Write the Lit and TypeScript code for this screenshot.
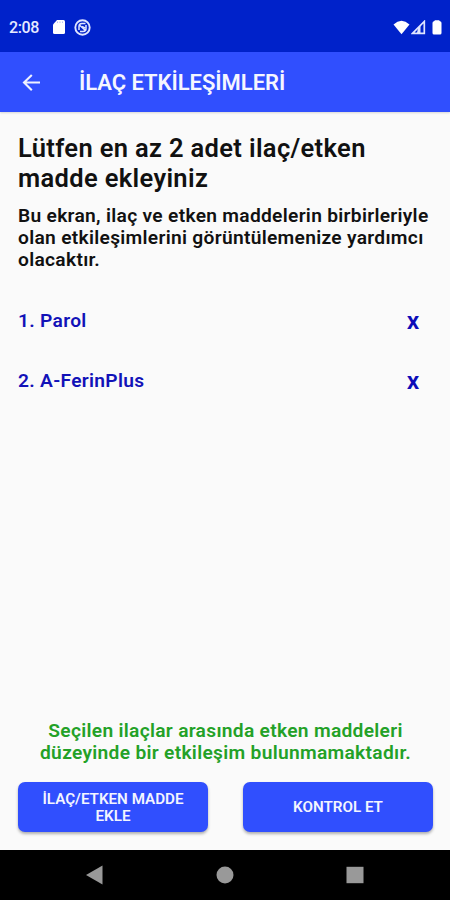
import { LitElement, html, css, svg } from "lit";
import { customElement, state } from "lit/decorators.js";

@customElement("status-bar")
class StatusBar extends LitElement {
  static styles = css`
    :host { display: flex; height: 52px; background: #0022ca; color: #e6eaff; align-items: center; padding: 2px 8px 0 9px; box-sizing: border-box; font-size: 16px; font-weight: 500; }
    .time { width: 43px; line-height: 20px; letter-spacing: -0.4px; padding-top: 1px; }
    .spacer { flex: 1; }
    svg { display: block; }
    .sync { margin-left: 8px; }
    .signal { margin-left: 1px; }
    .battery { margin-left: 6px; }
  `;
  render() {
    return html`
      <span class="time">2:08</span>
      <svg width="14" height="14" viewBox="0 0 14 14"><path d="M5 0H11.5Q13 0 13 1.5V12.5Q13 14 11.5 14H2.500Q1 14 1 12.500V4.500Z" fill="#fff"/><path d="M5.500 1.500v1.500M8 1.500v1.500M10.500 1.500v1.500" stroke="#b9c3f5" stroke-width="1"/></svg>
      <svg class="sync" width="17" height="17" viewBox="0 0 17 17" fill="none" stroke="#dfe5ff"><circle cx="8.500" cy="8.500" r="7.200" stroke-width="1.900"/><path d="M5 11V7.500Q5 4.500 8 4.500H11.500M12 6V9.500Q12 12.500 9 12.500H6M4.800 5.500L12 12M8 7.500L11 9" stroke-width="1.500"/></svg>
      <span class="spacer"></span>
      <svg width="17" height="15" viewBox="0 0 17 15"><path d="M0.500 4.500Q8.500 -2.800 16.500 4.500L8.500 14.300Z" fill="#fff"/></svg>
      <svg class="signal" width="15" height="15" viewBox="0 0 15 15"><path d="M1.500 13.400L13.300 1.500V13.400Z" fill="none" stroke="#dfe5ff" stroke-width="1.700"/><path d="M7 8L9.500 5.500V13H6Z" fill="#dfe5ff"/></svg>
      <svg class="battery" width="10" height="15" viewBox="0 0 10 15"><path d="M3 0.300H7L8 1.200Q9.500 1.500 9.500 3V13Q9.500 14.500 8 14.500H2Q0.500 14.500 0.500 13V3Q0.500 1.500 2 1.200Z" fill="#fff"/></svg>
    `;
  }
}

@customElement("app-bar")
class AppBar extends LitElement {
  static styles = css`
    :host { display: flex; align-items: center; height: 60px; background: #304ffe; color: #f5f6ff; padding: 2px 0 0 22px; box-sizing: border-box; box-shadow: 0 1px 2px rgba(0, 0, 0, 0.15); }
    .back { width: 19px; height: 18px; margin-right: 38px; display: block; }
    .title { font-size: 22px; font-weight: 600; line-height: 30px; letter-spacing: -0.05px; white-space: nowrap; }
  `;
  render() {
    return html`
      <svg class="back" viewBox="0 0 19 18" fill="none" stroke="#eef1ff" stroke-width="2.100"><path d="M18 8.500H2M9.800 0.900L2 8.500L9.800 16.200"/></svg>
      <span class="title">İLAÇ ETKİLEŞİMLERİ</span>
    `;
  }
}

@customElement("nav-bar")
class NavBar extends LitElement {
  static styles = css`
    :host { display: flex; height: 50px; background: #000; justify-content: space-between; align-items: center; padding: 0 85px; box-sizing: border-box; }
    svg { display: block; width: 20px; height: 20px; fill: #999; }
  `;
  render() {
    const shapes = [
      svg`<path d="M1 10L17.500 0.500V19.500Z"/>`,
      svg`<circle cx="10" cy="10" r="8.500"/>`,
      svg`<rect x="1.500" y="1.800" width="17" height="16.400"/>`,
    ];
    return shapes.map((s) => html`<svg viewBox="0 0 20 20">${s}</svg>`);
  }
}

@customElement("app-root")
class AppRoot extends LitElement {
  static styles = css`
    :host { display: flex; flex-direction: column; width: 450px; height: 900px; overflow: hidden; background: #fafafa; color: #111; font-family: Roboto, "Liberation Sans", sans-serif; font-weight: 600; }
    main { flex: 1; display: flex; flex-direction: column; padding: 21px 17px 18px 18px; }
    h1 { margin: 0; font-size: 25.5px; line-height: 30px; font-weight: 600; letter-spacing: 0.34px; white-space: nowrap; }
    p { margin: 0; font-size: 19.2px; line-height: 22px; letter-spacing: 0.3px; white-space: nowrap; }
    .intro { margin-top: 12px; }
    .list { margin-top: 20px; }
    .row { display: flex; justify-content: space-between; align-items: center; height: 60px; color: #1212b8; font-size: 19.2px; letter-spacing: 0.3px; }
    .row span { padding-bottom: 2px; }
    .remove { font: inherit; font-size: 19px; font-weight: 800; color: #0c0cb8; border: 0; background: none; padding: 3px 14px 0 14px; letter-spacing: 0; }
    .result { margin-top: auto; text-align: center; color: #23a127; }
    .actions { display: grid; grid-template-columns: 190px 190px; justify-content: space-between; margin-top: 18px; }
    .action { height: 50px; border: 0; border-radius: 7px; background: #304ffe; color: #f3f5ff; font: inherit; font-size: 15.2px; line-height: 17.5px; padding: 2px 0 0; box-shadow: 0 2px 3px rgba(0, 0, 0, 0.3); }
  `;
  @state() private items = ["Parol", "A-FerinPlus"];
  private remove(item: string) {
    this.items = this.items.filter((i) => i !== item);
  }
  render() {
    return html`
      <status-bar></status-bar>
      <app-bar></app-bar>
      <main>
        <h1>Lütfen en az 2 adet ilaç/etken<br>madde ekleyiniz</h1>
        <p class="intro">Bu ekran, ilaç ve etken maddelerin birbirleriyle<br>olan etkileşimlerini görüntülemenize yardımcı<br>olacaktır.</p>
        <div class="list">
          ${this.items.map((item, i) => html`<div class="row"><span>${i + 1}. ${item}</span><button class="remove" @click=${() => this.remove(item)}>X</button></div>`)}
        </div>
        <p class="result">Seçilen ilaçlar arasında etken maddeleri<br>düzeyinde bir etkileşim bulunmamaktadır.</p>
        <div class="actions">
          <button class="action">İLAÇ/ETKEN MADDE<br>EKLE</button>
          <button class="action">KONTROL ET</button>
        </div>
      </main>
      <nav-bar></nav-bar>
    `;
  }
}
